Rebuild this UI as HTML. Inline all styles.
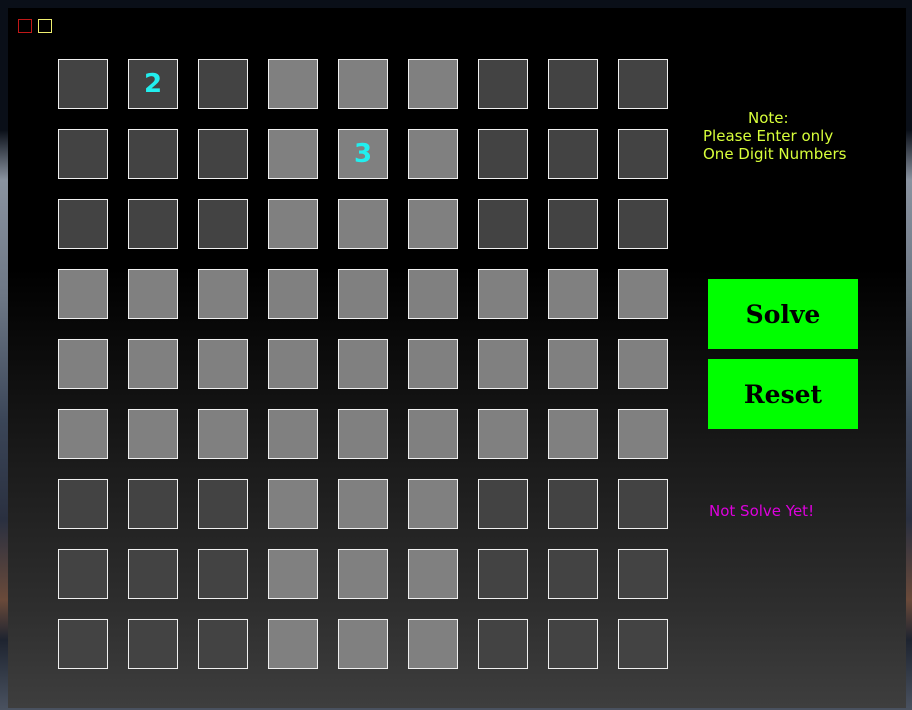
<!DOCTYPE html>
<html><head><style>
html,body{margin:0;padding:0}
body{width:912px;height:710px;position:relative;overflow:hidden;
background:linear-gradient(180deg,#0a0f18 0px,#0a0f18 130px,#8a93a0 180px,#6c7684 300px,#3b4658 420px,#2a3040 520px,#6a4a3a 600px,#1e2430 640px,#4a5260 710px);}
#win{position:absolute;left:8px;top:8px;width:898px;height:700px;
background:linear-gradient(180deg,#000 0px,#000 260px,#1a1a1a 450px,#2e2e2e 600px,#3e3e3e 700px);}
.sq{position:absolute;top:11px;width:14px;height:14px;box-sizing:border-box}
.c{position:absolute;width:50px;height:50px;box-sizing:border-box;border:1px solid #f0f0f0;
font:bold 26px "DejaVu Sans","Liberation Sans",sans-serif;color:#22eeee;text-align:center;line-height:48px}
.d{background:#434343}.l{background:#808080}
.note{position:absolute;left:695px;top:101px;color:#d8ff3a;font:15px "DejaVu Sans","Liberation Sans",sans-serif;line-height:18px;white-space:pre}
.btn{position:absolute;left:700px;width:150px;height:70px;background:#00ff00;color:#000;
font:bold 25px "DejaVu Serif","Liberation Serif",serif;text-align:center;line-height:71px}
.st{position:absolute;left:701px;top:494px;color:#dd00dd;font:15px "DejaVu Sans","Liberation Sans",sans-serif}
</style></head><body>
<div id="win">
<div class="sq" style="left:10px;border:1px solid #c01818"></div>
<div class="sq" style="left:30px;border:1px solid #f0f070"></div>
<div id="grid"></div>
<div class="note"><span style="padding-left:45px">Note:</span>
Please Enter only
One Digit Numbers</div>
<div class="btn" style="top:271px">Solve</div>
<div class="btn" style="top:351px">Reset</div>
<div class="st">Not Solve Yet!</div>
</div>
<script>
var g=document.getElementById('grid'),h='';
for(var r=0;r<9;r++)for(var c=0;c<9;c++){
var br=Math.floor(r/3),bc=Math.floor(c/3);
var light=(br==1||bc==1);
var t='';if(r==0&&c==1)t='2';if(r==1&&c==4)t='3';
h+='<div class="c '+(light?'l':'d')+'" style="left:'+(50+70*c)+'px;top:'+(51+70*r)+'px">'+t+'</div>';}
g.innerHTML=h;
</script>
</body></html>
